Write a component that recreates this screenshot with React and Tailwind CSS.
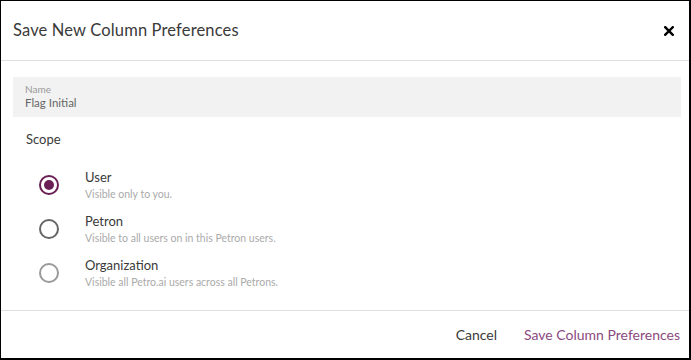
import React, { useState } from 'react';

const options = [
  { id: 'user', label: 'User', desc: 'Visible only to you.', ring: 'border-[#666666]' },
  { id: 'petron', label: 'Petron', desc: 'Visible to all users on in this Petron users.', ring: 'border-[#666666]' },
  { id: 'org', label: 'Organization', desc: 'Visible all Petro.ai users across all Petrons.', ring: 'border-[#9a9a9a]' },
];

const App = () => {
  const [scope, setScope] = useState('user');

  return (
    <div className="w-[691px] h-[360px] bg-white font-['Lato',sans-serif] text-[#333]">
      <div className="h-full flex flex-col border-t border-l border-r-2 border-b-2 border-black">
        {/* Header */}
        <div className="h-[60px] flex items-center justify-between pl-3 pr-[15px] border-b border-[#e0e0e0]">
          <h2 className="text-[16.5px] tracking-[0.15px] text-[#3a3a3a]">Save New Column Preferences</h2>
          <button className="text-black">
            <svg width="10" height="10" viewBox="0 0 10 10">
              <path d="M1.2 1.2 L8.8 8.8 M8.8 1.2 L1.2 8.8" stroke="currentColor" strokeWidth="2.4" strokeLinecap="square" />
            </svg>
          </button>
        </div>

        {/* Body */}
        <div className="flex-1 pt-4 pl-3 pr-2">
          <div className="h-[40px] bg-[#f2f2f2] px-3 pb-[2px] flex flex-col justify-center">
            <div className="text-[10px] leading-[13px] text-[#999]">Name</div>
            <div className="text-[11.5px] leading-[14px] text-[#666]">Flag Initial</div>
          </div>

          <div className="mt-[13px] pl-[13px] text-[13px] text-[#3a3a3a]">Scope</div>

          <div className="mt-[18px] flex flex-col gap-[10px]">
            {options.map((o) => (
              <label key={o.id} className="flex items-center h-[34px] cursor-pointer" onClick={() => setScope(o.id)}>
                <span className="w-[72px] flex justify-center">
                  <span
                    className={`w-[20px] h-[20px] rounded-full border-2 flex items-center justify-center ${scope === o.id ? 'border-[#6b1d55]' : o.ring}`}
                  >
                    {scope === o.id && <span className="w-[10px] h-[10px] rounded-full bg-[#6b1d55]"></span>}
                  </span>
                </span>
                <span className="flex flex-col">
                  <span className="text-[13px] leading-[17px] text-[#3a3a3a]">{o.label}</span>
                  <span className="text-[10.5px] leading-[14px] text-[#aaa] mt-[1px]">{o.desc}</span>
                </span>
              </label>
            ))}
          </div>
        </div>

        {/* Footer */}
        <div className="h-[48px] border-t border-[#e0e0e0] flex items-center justify-end gap-[27px] pr-[9px]">
          <button className="text-[14px] text-[#3a3a3a]">Cancel</button>
          <button className="text-[14px] text-[#8a4a7e]">Save Column Preferences</button>
        </div>
      </div>
    </div>
  );
};

export default App;
